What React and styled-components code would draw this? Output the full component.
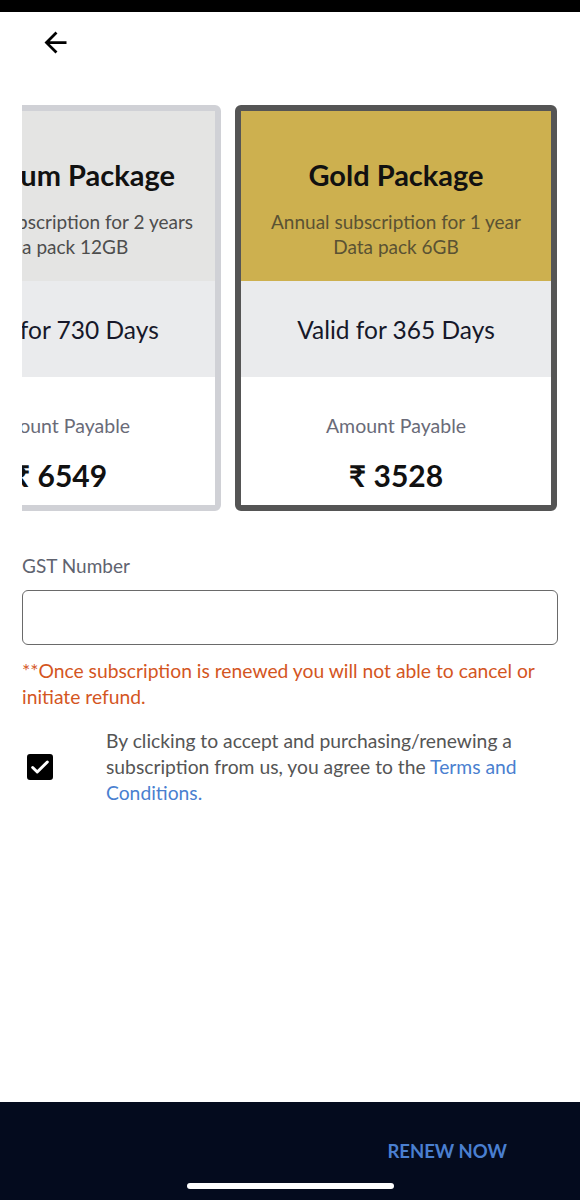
import React, { useState } from "react";
import styled, { createGlobalStyle } from "styled-components";
import { MdArrowBack } from "react-icons/md";

const GlobalStyle = createGlobalStyle`
  body {
    margin: 0;
    font-family: Lato, "Noto Sans", "DejaVu Sans", sans-serif;
    background: #fff;
  }
`;

const Page = styled.div`
  width: 580px;
  min-height: 1200px;
  display: flex;
  flex-direction: column;
`;

const StatusBar = styled.div`
  height: 12px;
  background: #000;
`;

const TopBar = styled.div`
  height: 93px;
  box-sizing: border-box;
  padding: 14px 0 0 39px;
  color: #000;
`;

const BackButton = styled.button`
  border: none;
  background: none;
  padding: 0;
  display: block;
  cursor: pointer;
  color: #000;
`;

const Carousel = styled.div`
  margin: 0 22px;
  overflow: hidden;
`;

const Track = styled.div`
  display: flex;
  gap: 14px;
  margin-left: -123px;
`;

const Card = styled.div`
  width: 322px;
  height: 406px;
  box-sizing: border-box;
  flex-shrink: 0;
  border: 6px solid ${(p) => (p.$active ? "#555555" : "#d0d1d6")};
  border-radius: 6px;
  overflow: hidden;
  display: flex;
  flex-direction: column;
  text-align: center;
`;

const CardHead = styled.div`
  height: 170px;
  box-sizing: border-box;
  padding-top: 47px;
  background: ${(p) => (p.$active ? "#cdb04f" : "#e4e4e3")};
`;

const Title = styled.div`
  font-size: 29px;
  line-height: 34px;
  font-weight: 700;
  color: #111;
  white-space: nowrap;
`;

const Subtitle = styled.div`
  margin-top: 17px;
  font-size: 19px;
  line-height: 25px;
  color: ${(p) => (p.$active ? "#5a5233" : "#4d4d4d")};
  white-space: nowrap;
`;

const Days = styled.div`
  height: 96px;
  display: flex;
  align-items: center;
  justify-content: center;
  background: #eaebed;
  font-size: 24.5px;
  color: #16182a;
  white-space: nowrap;
`;

const AmountBox = styled.div`
  flex: 1;
  background: #fff;
  padding-top: 37px;
`;

const AmountLabel = styled.div`
  font-size: 19.5px;
  line-height: 24px;
  color: #6a6b78;
  white-space: nowrap;
`;

const Price = styled.div`
  margin-top: 19px;
  font-size: 30px;
  line-height: 36px;
  font-weight: 700;
  color: #111;
  white-space: nowrap;
`;

const Form = styled.div`
  padding: 43px 22px 0;
`;

const Label = styled.div`
  font-size: 19px;
  line-height: 24px;
  color: #60636f;
`;

const Input = styled.input`
  display: block;
  margin-top: 12px;
  width: 100%;
  height: 55px;
  box-sizing: border-box;
  border: 1.5px solid #6a6a6a;
  border-radius: 6px;
  padding: 0 14px;
  font-size: 18px;
  font-family: inherit;
  outline: none;
`;

const Warning = styled.div`
  margin-top: 13px;
  font-size: 19.3px;
  line-height: 26px;
  color: #d4561f;
`;

const Consent = styled.div`
  margin-top: 18px;
  display: flex;
  align-items: center;
  gap: 53px;
  padding-left: 5px;
`;

const Check = styled.button`
  width: 26px;
  height: 26px;
  flex-shrink: 0;
  padding: 0;
  border-radius: 3px;
  background: ${(p) => (p.$checked ? "#000" : "#fff")};
  border: 2px solid #000;
  box-sizing: border-box;
  display: flex;
  align-items: center;
  justify-content: center;
  cursor: pointer;
`;

const ConsentText = styled.p`
  margin: 0;
  font-size: 19.3px;
  line-height: 26px;
  color: #555;
`;

const Link = styled.a`
  color: #4a7fd0;
  text-decoration: none;
`;

const BottomBar = styled.div`
  margin-top: auto;
  height: 98px;
  box-sizing: border-box;
  background: #040b1e;
  padding-top: 37px;
  display: flex;
  flex-direction: column;
  align-items: center;
`;

const ActionRow = styled.div`
  align-self: stretch;
  display: flex;
  justify-content: flex-end;
  padding-right: 73px;
`;

const RenewButton = styled.button`
  border: none;
  background: none;
  padding: 0;
  font-family: inherit;
  font-size: 18.5px;
  line-height: 24px;
  font-weight: 700;
  color: #4a7fd0;
  cursor: pointer;
`;

const HomePill = styled.div`
  margin-top: 20px;
  width: 207px;
  height: 6px;
  border-radius: 3px;
  background: #fff;
`;

const packages = [
  {
    name: "Premium Package",
    desc: "Biennial subscription for 2 years",
    data: "Data pack 12GB",
    days: 730,
    price: 6549,
  },
  {
    name: "Gold Package",
    desc: "Annual subscription for 1 year",
    data: "Data pack 6GB",
    days: 365,
    price: 3528,
    active: true,
  },
];

const App = () => {
  const [checked, setChecked] = useState(true);
  const [gst, setGst] = useState("");

  return (
    <Page>
      <GlobalStyle />
      <StatusBar />
      <TopBar>
        <BackButton>
          <MdArrowBack size={33} />
        </BackButton>
      </TopBar>

      <Carousel>
        <Track>
          {packages.map((p) => (
            <Card key={p.name} $active={p.active}>
              <CardHead $active={p.active}>
                <Title>{p.name}</Title>
                <Subtitle $active={p.active}>
                  {p.desc}
                  <br />
                  {p.data}
                </Subtitle>
              </CardHead>
              <Days>Valid for {p.days} Days</Days>
              <AmountBox>
                <AmountLabel>Amount Payable</AmountLabel>
                <Price>₹ {p.price}</Price>
              </AmountBox>
            </Card>
          ))}
        </Track>
      </Carousel>

      <Form>
        <Label>GST Number</Label>
        <Input value={gst} onChange={(e) => setGst(e.target.value)} />
        <Warning>
          **Once subscription is renewed you will not able to cancel or initiate refund.
        </Warning>
        <Consent>
          <Check $checked={checked} onClick={() => setChecked(!checked)}>
            {checked && (
              <svg width="22" height="22" viewBox="0 0 24 24">
                <path d="M4 12.5l5 5L20 6.5" fill="none" stroke="#fff" strokeWidth="3.2" strokeLinecap="round" strokeLinejoin="round" />
              </svg>
            )}
          </Check>
          <ConsentText>
            By clicking to accept and purchasing/renewing a subscription from us, you agree to the{" "}
            <Link>Terms and Conditions.</Link>
          </ConsentText>
        </Consent>
      </Form>

      <BottomBar>
        <ActionRow>
          <RenewButton>RENEW NOW</RenewButton>
        </ActionRow>
        <HomePill />
      </BottomBar>
    </Page>
  );
};

export default App;
